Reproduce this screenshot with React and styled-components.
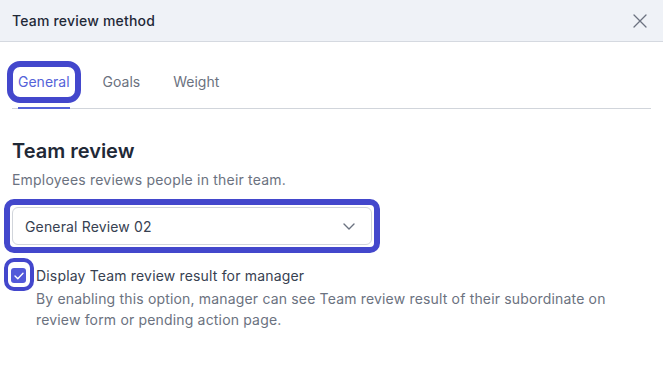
import React, { useState } from "react";
import styled, { createGlobalStyle } from "styled-components";

const GlobalStyle = createGlobalStyle`
  body {
    margin: 0;
    background: #ffffff;
    font-family: Inter, "Noto Sans", sans-serif;
    color: #1f2937;
  }
`;

const Dialog = styled.div`
  width: 663px;
  height: 374px;
  background: #ffffff;
  overflow: hidden;
`;

const Header = styled.div`
  height: 41px;
  display: flex;
  align-items: center;
  justify-content: space-between;
  padding: 0 12px;
  background: #eff2f7;
  border-bottom: 1px solid #d5d9e0;
`;

const Title = styled.div`
  font-size: 14px;
  font-weight: 500;
  letter-spacing: 0.2px;
  color: #1f2937;
`;

const CloseButton = styled.button`
  display: flex;
  align-items: center;
  justify-content: center;
  padding: 0;
  margin-right: 4px;
  border: none;
  background: none;
  cursor: pointer;
`;

const Body = styled.div`
  padding: 0 12px;
`;

const TabList = styled.div`
  display: flex;
  gap: 33px;
  padding: 30px 6px 0;
  border-bottom: 1px solid #d1d5db;
`;

const Tab = styled.div`
  font-size: 14px;
  line-height: 20px;
  padding-bottom: 15px;
  margin-bottom: -1px;
  color: ${({ active }) => (active ? "#5563d9" : "#6b7280")};
  border-bottom: 2px solid ${({ active }) => (active ? "#5563d9" : "transparent")};
  cursor: pointer;
`;

const Marked = styled.span`
  display: ${({ block }) => (block ? "block" : "inline-block")};
  outline: ${({ thick }) => thick}px solid #4347cc;
  outline-offset: ${({ offset }) => offset}px;
  border-radius: 2px;
`;

const Heading = styled.h2`
  margin: 28px 0 0;
  font-size: 20px;
  line-height: 28px;
  font-weight: 600;
  color: #1f2937;
`;

const Subtitle = styled.p`
  margin: 5px 0 0;
  font-size: 14px;
  line-height: 20px;
  letter-spacing: 0.2px;
  color: #6b7280;
`;

const SelectWrap = styled.div`
  width: 360px;
  margin-top: 17px;
`;

const Select = styled.div`
  box-sizing: border-box;
  height: 38px;
  display: flex;
  align-items: center;
  justify-content: space-between;
  padding: 0 16px 0 12px;
  border: 1px solid #d1d5db;
  border-radius: 6px;
  font-size: 14px;
  letter-spacing: 0.15px;
  color: #374151;
  background: #ffffff;
`;

const OptionRow = styled.div`
  display: flex;
  align-items: flex-start;
  gap: 10px;
  margin-top: 21px;
`;

const CheckBox = styled.div`
  width: 15px;
  height: 15px;
  margin: 2px 0 0 -1px;
  flex-shrink: 0;
  border-radius: 3px;
  background: #5259d9;
  display: flex;
  align-items: center;
  justify-content: center;
`;

const OptionText = styled.div`
  flex: 1;
`;

const Label = styled.div`
  font-size: 14px;
  line-height: 20px;
  letter-spacing: 0.17px;
  color: #374151;
`;

const Description = styled.div`
  margin-top: 2px;
  font-size: 14px;
  line-height: 21px;
  letter-spacing: 0.17px;
  color: #6b7280;
`;

const tabs = ["General", "Goals", "Weight"];

export default function App() {
  const [active, setActive] = useState("General");
  const [checked, setChecked] = useState(true);

  return (
    <Dialog>
      <GlobalStyle />
      <Header>
        <Title>Team review method</Title>
        <CloseButton aria-label="Close">
          <svg width="14" height="14" viewBox="0 0 14 14" fill="none">
            <path d="M1 1L13 13M13 1L1 13" stroke="#6b7280" strokeWidth="1.3" strokeLinecap="round" />
          </svg>
        </CloseButton>
      </Header>
      <Body>
        <TabList>
          {tabs.map((t) => (
            <Tab key={t} active={active === t} onClick={() => setActive(t)}>
              {t === "General" ? (
                <Marked thick={6} offset={5}>{t}</Marked>
              ) : (
                t
              )}
            </Tab>
          ))}
        </TabList>

        <Heading>Team review</Heading>
        <Subtitle>Employees reviews people in their team.</Subtitle>

        <SelectWrap>
          <Marked block thick={6} offset={2}>
            <Select>
              <span>General Review 02</span>
              <svg width="12" height="7" viewBox="0 0 12 7" fill="none">
                <path d="M1 1L6 6L11 1" stroke="#6b7280" strokeWidth="1.4" strokeLinecap="round" strokeLinejoin="round" />
              </svg>
            </Select>
          </Marked>
        </SelectWrap>

        <OptionRow>
          <Marked thick={4} offset={4}>
            <CheckBox onClick={() => setChecked(!checked)}>
              {checked && (
                <svg width="10" height="8" viewBox="0 0 10 8" fill="none">
                  <path d="M1 4L3.8 6.8L9 1.2" stroke="#ffffff" strokeWidth="1.4" strokeLinecap="round" strokeLinejoin="round" />
                </svg>
              )}
            </CheckBox>
          </Marked>
          <OptionText>
            <Label>Display Team review result for manager</Label>
            <Description>
              By enabling this option, manager can see Team review result of their subordinate on review form or pending action page.
            </Description>
          </OptionText>
        </OptionRow>
      </Body>
    </Dialog>
  );
}
